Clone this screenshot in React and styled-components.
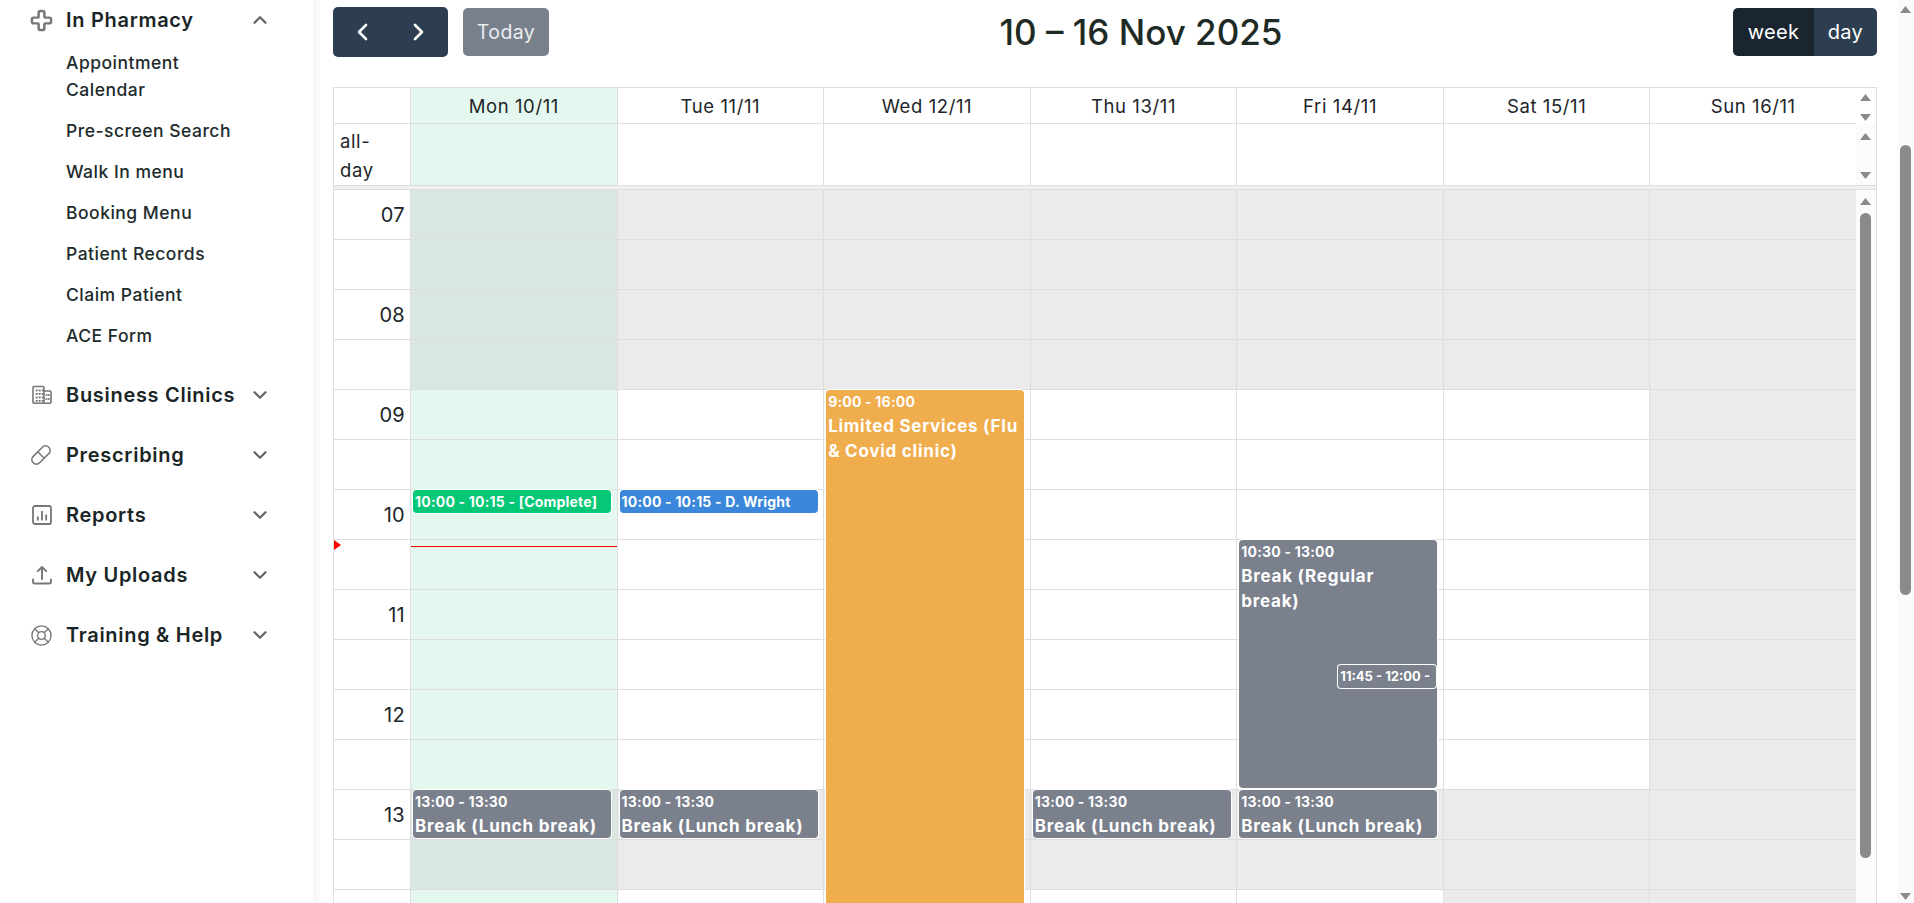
import React from 'react';
import styled, { createGlobalStyle } from 'styled-components';
import { Cross, Pill, LifeBuoy, ChevronUp, ChevronDown } from 'lucide-react';

const FONT = '"Inter", "Noto Sans", "Liberation Sans", sans-serif';
const INK = '#212529';
const GRID_LINE = '#dedede';
const SLOT_HEIGHT = 50;
const FIRST_HOUR = 7;

const GlobalStyle = createGlobalStyle`
  html, body {
    margin: 0;
    height: 100%;
    overflow: hidden;
    background: #fff;
  }
  body {
    font-family: ${FONT};
    color: ${INK};
  }
  * {
    box-sizing: border-box;
  }
`;

const BuildingIcon = () => (
  <svg width="20" height="20" viewBox="0 0 20 20" fill="none">
    <path d="M1 18.2V2.5C1 1.9 1.4 1.5 2 1.5h9c.6 0 1 .4 1 1v15.7M12 6h6c.6 0 1 .4 1 1v10.2c0 .6-.4 1-1 1H2c-.6 0-1-.4-1-1" stroke="currentColor" strokeWidth="1.6" />
    {[4, 7, 10].flatMap(x => [4.5, 8, 11.5, 15].map(y => (
      <rect key={`${x}-${y}`} x={x - 0.3} y={y} width="1.9" height="1.9" fill="currentColor" />
    )))}
    {[14, 16.2].flatMap(x => [9, 13].map(y => (
      <rect key={`${x}-${y}`} x={x - 0.3} y={y} width="1.7" height="1.9" fill="currentColor" />
    )))}
  </svg>
);

const ReportsIcon = () => (
  <svg width="20" height="20" viewBox="0 0 20 20" fill="none" stroke="currentColor">
    <rect x="1" y="1" width="18" height="18" rx="2" strokeWidth="1.8" />
    <path d="M5.8 15.5v-4M10 15.5V6M14.2 15.5V9.5" strokeWidth="1.8" />
  </svg>
);

const UploadIcon = () => (
  <svg width="20" height="20" viewBox="0 0 20 20" fill="none" stroke="currentColor" strokeWidth="1.9" strokeLinecap="round" strokeLinejoin="round">
    <path d="M10 14V2M5.8 6.2 10 2l4.2 4.2" />
    <path d="M1 14.5v2.6c0 .8.6 1.4 1.4 1.4h15.2c.8 0 1.4-.6 1.4-1.4v-2.6" />
  </svg>
);

const NAV = [
  {
    label: 'In Pharmacy',
    icon: <Cross size={23} strokeWidth={2.6} />,
    open: true,
    items: ['Appointment Calendar', 'Pre-screen Search', 'Walk In menu', 'Booking Menu', 'Patient Records', 'Claim Patient', 'ACE Form'],
  },
  { label: 'Business Clinics', icon: <BuildingIcon /> },
  { label: 'Prescribing', icon: <Pill size={22} strokeWidth={1.6} /> },
  { label: 'Reports', icon: <ReportsIcon /> },
  { label: 'My Uploads', icon: <UploadIcon /> },
  { label: 'Training & Help', icon: <LifeBuoy size={23} strokeWidth={1.4} /> },
];

const DAYS = ['Mon 10/11', 'Tue 11/11', 'Wed 12/11', 'Thu 13/11', 'Fri 14/11', 'Sat 15/11', 'Sun 16/11'];

const CLOSED = [
  [[7, 9], [13, 14]],
  [[7, 9], [13, 14]],
  [[7, 9], [13, 14]],
  [[7, 9], [13, 14]],
  [[7, 9], [13, 14]],
  [[7, 9], [13, 15]],
  [[7, 15]],
];

const LUNCH = { start: 13, end: 13.5, time: '13:00 - 13:30', title: 'Break (Lunch break)', color: '#7a808c' };

const EVENTS = [
  [{ start: 10, end: 10.25, time: '10:00 - 10:15 - [Complete]', color: '#04c875' }, LUNCH],
  [{ start: 10, end: 10.25, time: '10:00 - 10:15 - D. Wright', color: '#3a87db' }, LUNCH],
  [{ start: 9, end: 16, time: '9:00 - 16:00', title: 'Limited Services (Flu\n& Covid clinic)', color: '#f0ad4e' }],
  [LUNCH],
  [
    { start: 10.5, end: 13, time: '10:30 - 13:00', title: 'Break (Regular\nbreak)', color: '#7a808c' },
    { start: 11.75, end: 12, time: '11:45 - 12:00 -', color: '#7a808c', nested: true },
    LUNCH,
  ],
  [],
  [],
];

const SLOTS = Array.from({ length: 15 }, (_, i) => FIRST_HOUR + i / 2);
const hourToY = hour => (hour - FIRST_HOUR) * 2 * SLOT_HEIGHT;
const isClosed = (dayIdx, hour) => CLOSED[dayIdx].some(([from, to]) => hour >= from && hour < to);
const axisLabel = hour => (Number.isInteger(hour) && hour < 14 ? String(hour).padStart(2, '0') : '');

const Arrow = ({ up }) => (
  <ArrowMark viewBox="0 0 11 7">
    <path d={up ? 'M5.5 0 11 7H0Z' : 'M0 0h11L5.5 7Z'} />
  </ArrowMark>
);

const App = () => (
  <Page>
    <GlobalStyle />
    <Sidebar>
      {NAV.map(group => (
        <section key={group.label}>
          <NavHead>
            <NavIcon>{group.icon}</NavIcon>
            <NavLabel>{group.label}</NavLabel>
            <NavCaret>
              {group.open ? <ChevronUp size={22} strokeWidth={2.5} /> : <ChevronDown size={22} strokeWidth={2.5} />}
            </NavCaret>
          </NavHead>
          {group.items && (
            <SubList>
              {group.items.map(item => <SubItem key={item}>{item}</SubItem>)}
            </SubList>
          )}
        </section>
      ))}
    </Sidebar>
    <Gutter />
    <Main>
      <Toolbar>
        <ToolGroup>
          <NavButtons>
            <svg width="12" height="18" viewBox="0 0 12 18" fill="none" stroke="#fff" strokeWidth="2.6" strokeLinecap="round" strokeLinejoin="round">
              <path d="M10 2 3 9l7 7" />
            </svg>
            <svg width="12" height="18" viewBox="0 0 12 18" fill="none" stroke="#fff" strokeWidth="2.6" strokeLinecap="round" strokeLinejoin="round">
              <path d="m2 2 7 7-7 7" />
            </svg>
          </NavButtons>
          <TodayButton>Today</TodayButton>
        </ToolGroup>
        <Title>10 – 16 Nov 2025</Title>
        <ViewSwitch>
          <ViewButton $active>week</ViewButton>
          <ViewButton>day</ViewButton>
        </ViewSwitch>
      </Toolbar>

      <Calendar>
        <HeadRow>
          <AxisHead />
          {DAYS.map((day, i) => <DayHead key={day} $today={i === 0}>{day}</DayHead>)}
          <HeadScroll>
            <Arrow up />
            <Arrow />
          </HeadScroll>
        </HeadRow>
        <AllDayRow>
          <AllDayLabel>all-day</AllDayLabel>
          {DAYS.map((day, i) => <AllDayCell key={day} $today={i === 0} />)}
          <AllDayScroll>
            <Arrow up />
            <Arrow />
          </AllDayScroll>
        </AllDayRow>
        <Divider />
        <Body>
          <div>
            {SLOTS.map(hour => <AxisSlot key={hour}>{axisLabel(hour)}</AxisSlot>)}
            <NowArrow style={{ top: hourToY(10.55) - 5 }} />
          </div>
          {DAYS.map((day, dayIdx) => (
            <DayColumn key={day}>
              {SLOTS.map(hour => (
                <Slot key={hour} $today={dayIdx === 0} $closed={isClosed(dayIdx, hour)} />
              ))}
              {EVENTS[dayIdx].map(ev => (
                <EventCard
                  key={ev.time}
                  $nested={ev.nested}
                  style={{
                    top: hourToY(ev.start) - (ev.nested ? 1 : 0),
                    height: hourToY(ev.end) - hourToY(ev.start) - (ev.nested ? 0 : 2),
                    background: ev.color,
                  }}
                >
                  <EventTime $nested={ev.nested}>{ev.time}</EventTime>
                  {ev.title && <EventTitle>{ev.title}</EventTitle>}
                </EventCard>
              ))}
              {dayIdx === 0 && <NowLine style={{ top: hourToY(10.56) }} />}
            </DayColumn>
          ))}
          <BodyScroll>
            <Arrow up />
            <InnerThumb />
          </BodyScroll>
        </Body>
      </Calendar>
    </Main>
    <PageScroll>
      <Arrow up />
      <PageThumb />
      <BottomArrow><Arrow /></BottomArrow>
    </PageScroll>
  </Page>
);

export default App;

const Page = styled.div`
  display: flex;
  width: 100%;
  height: 100vh;
  overflow: hidden;
`;

const Sidebar = styled.nav`
  flex: 0 0 313px;
  margin-top: -10px;
`;

const NavHead = styled.div`
  display: flex;
  align-items: center;
  height: 60px;
  padding: 0 42px 0 32px;
`;

const NavIcon = styled.span`
  display: flex;
  flex: 0 0 34px;
  color: #777;

  & > svg.lucide {
    margin-left: -2px;
  }
`;

const NavLabel = styled.span`
  flex: 1;
  font-size: 20px;
  font-weight: 600;
  line-height: 27px;
  letter-spacing: 0.7px;
  color: #1a2526;
`;

const NavCaret = styled.span`
  display: flex;
  color: #666;
`;

const SubList = styled.ul`
  display: flex;
  flex-direction: column;
  gap: 14px;
  margin: -1px 0 0;
  padding: 0 55px 16px 66px;
  list-style: none;
`;

const SubItem = styled.li`
  font-size: 17.5px;
  font-weight: 500;
  line-height: 27px;
  letter-spacing: 0.5px;
  color: #212b2c;
`;

const Gutter = styled.div`
  flex: 0 0 7px;
  background: linear-gradient(to right, #f6f6f6, #fbfbfb);
`;

const Main = styled.main`
  flex: 1;
  min-width: 0;
  padding: 7px 20px 0 13px;
`;

const Toolbar = styled.header`
  display: flex;
  align-items: center;
  justify-content: space-between;
  height: 50px;
  margin-bottom: 30px;
`;

const ToolGroup = styled.div`
  display: flex;
  align-items: center;
  gap: 15px;
`;

const NavButtons = styled.div`
  display: flex;
  align-items: center;
  justify-content: center;
  gap: 45px;
  width: 115px;
  height: 50px;
  border-radius: 5px;
  background: #2c3e50;
`;

const TodayButton = styled.div`
  display: flex;
  align-items: center;
  justify-content: center;
  width: 86px;
  height: 48px;
  border-radius: 5px;
  background: #78808c;
  color: #eceef0;
  font-size: 19.5px;
  letter-spacing: 0.4px;
`;

const Title = styled.h2`
  margin: 0;
  font-size: 35px;
  font-weight: 500;
  line-height: 40px;
  color: #1e2a24;
`;

const ViewSwitch = styled.div`
  display: flex;
`;

const ViewButton = styled.div`
  display: flex;
  align-items: center;
  justify-content: center;
  width: ${({ $active }) => ($active ? '81px' : '63px')};
  height: 48px;
  background: ${({ $active }) => ($active ? '#1a252f' : '#2c3e50')};
  border-radius: ${({ $active }) => ($active ? '5px 0 0 5px' : '0 5px 5px 0')};
  color: #fff;
  font-size: 20px;
  letter-spacing: 0.3px;
`;

const Calendar = styled.div`
  border: solid ${GRID_LINE};
  border-width: 1px 1px 0;
  background: #fff;
`;

const GRID_COLUMNS = '76px repeat(7, 1fr) 20px';

const HeadRow = styled.div`
  display: grid;
  grid-template-columns: ${GRID_COLUMNS};
  height: 36px;
`;

const AxisHead = styled.div`
  border-bottom: 1px solid ${GRID_LINE};
`;

const DayHead = styled.div`
  display: flex;
  align-items: center;
  justify-content: center;
  border-left: 1px solid ${GRID_LINE};
  border-bottom: 1px solid ${GRID_LINE};
  background: ${({ $today }) => ($today ? '#e5f8f0' : '#fff')};
  font-size: 18.5px;
  letter-spacing: 0.6px;
`;

const AllDayRow = styled.div`
  display: grid;
  grid-template-columns: ${GRID_COLUMNS};
  height: 62px;
  border-bottom: 1px solid ${GRID_LINE};
`;

const AllDayLabel = styled.div`
  padding: 3px 20px 0 6px;
  font-size: 18.5px;
  line-height: 29px;
  letter-spacing: 0.6px;
`;

const AllDayCell = styled.div`
  border-left: 1px solid ${GRID_LINE};
  background: ${({ $today }) => ($today ? '#e5f8f0' : '#fff')};
`;

const Divider = styled.div`
  height: 4px;
  border-bottom: 1px solid ${GRID_LINE};
  background: #f0f0f0;
`;

const Body = styled.div`
  display: grid;
  grid-template-columns: ${GRID_COLUMNS};
  position: relative;
`;

const AxisSlot = styled.div`
  display: flex;
  align-items: center;
  justify-content: flex-end;
  height: ${SLOT_HEIGHT}px;
  padding-right: 5px;
  border-bottom: 1px solid ${GRID_LINE};
  font-size: 20px;
  font-weight: 400;
  letter-spacing: 0.3px;
`;

const NowArrow = styled.div`
  position: absolute;
  left: 0;
  width: 0;
  height: 0;
  border-style: solid;
  border-width: 5px 0 5px 7px;
  border-color: transparent transparent transparent #f00;
`;

const DayColumn = styled.div`
  position: relative;
  min-width: 0;
`;

const Slot = styled.div`
  height: ${SLOT_HEIGHT}px;
  border-left: 1px solid ${GRID_LINE};
  border-bottom: 1px solid ${GRID_LINE};
  background: ${({ $today, $closed }) => {
    if ($today) return $closed ? '#dae7e0' : '#e5f8f0';
    return $closed ? '#ebebeb' : '#fff';
  }};
`;

const EventCard = styled.div`
  position: absolute;
  left: ${({ $nested }) => ($nested ? '101px' : '3px')};
  right: ${({ $nested }) => ($nested ? '6px' : '5.5px')};
  overflow: hidden;
  padding: 0 0 0 ${({ $nested }) => ($nested ? '3px' : '2px')};
  border-radius: 4px;
  box-shadow: ${({ $nested }) => ($nested ? 'inset 0 0 0 1px #fff' : '0 0 0 1px #fff')};
  color: #fff;
  z-index: ${({ $nested }) => ($nested ? 2 : 1)};
`;

const EventTime = styled.div`
  font-size: ${({ $nested }) => ($nested ? '13px' : '14px')};
  font-weight: 700;
  line-height: 24px;
  letter-spacing: ${({ $nested }) => ($nested ? '0' : '0.2px')};
  white-space: nowrap;
`;

const EventTitle = styled.div`
  font-size: 17px;
  font-weight: 700;
  line-height: 25px;
  letter-spacing: 0.75px;
  white-space: pre-line;
`;

const NowLine = styled.div`
  position: absolute;
  left: 1px;
  right: 0;
  height: 1px;
  background: #f00;
  z-index: 2;
`;

const ArrowMark = styled.svg`
  display: block;
  flex: none;
  width: 11px;
  height: 7px;
  fill: #8a8a8a;
`;

const HeadScroll = styled.div`
  display: flex;
  flex-direction: column;
  align-items: center;
  gap: 13px;
  padding-top: 6px;
  background: #fff;
`;

const AllDayScroll = styled.div`
  display: flex;
  flex-direction: column;
  align-items: center;
  gap: 32px;
  padding-top: 9px;
  background: #fbfbfb;
`;

const BodyScroll = styled.div`
  display: flex;
  flex-direction: column;
  align-items: center;
  height: 713px;
  padding-top: 8px;
  background: #fbfbfb;
`;

const InnerThumb = styled.div`
  flex: none;
  width: 11px;
  height: 645px;
  margin-top: 8px;
  border-radius: 6px;
  background: #8a8a8a;
`;

const PageScroll = styled.aside`
  display: flex;
  flex: 0 0 17px;
  flex-direction: column;
  align-items: center;
  padding: 6px 0 3px;
  background: #fafafa;
`;

const PageThumb = styled.div`
  flex: none;
  width: 11px;
  height: 450px;
  margin-top: 132px;
  border-radius: 6px;
  background: #8a8a8a;
`;

const BottomArrow = styled.div`
  margin-top: auto;
`;
